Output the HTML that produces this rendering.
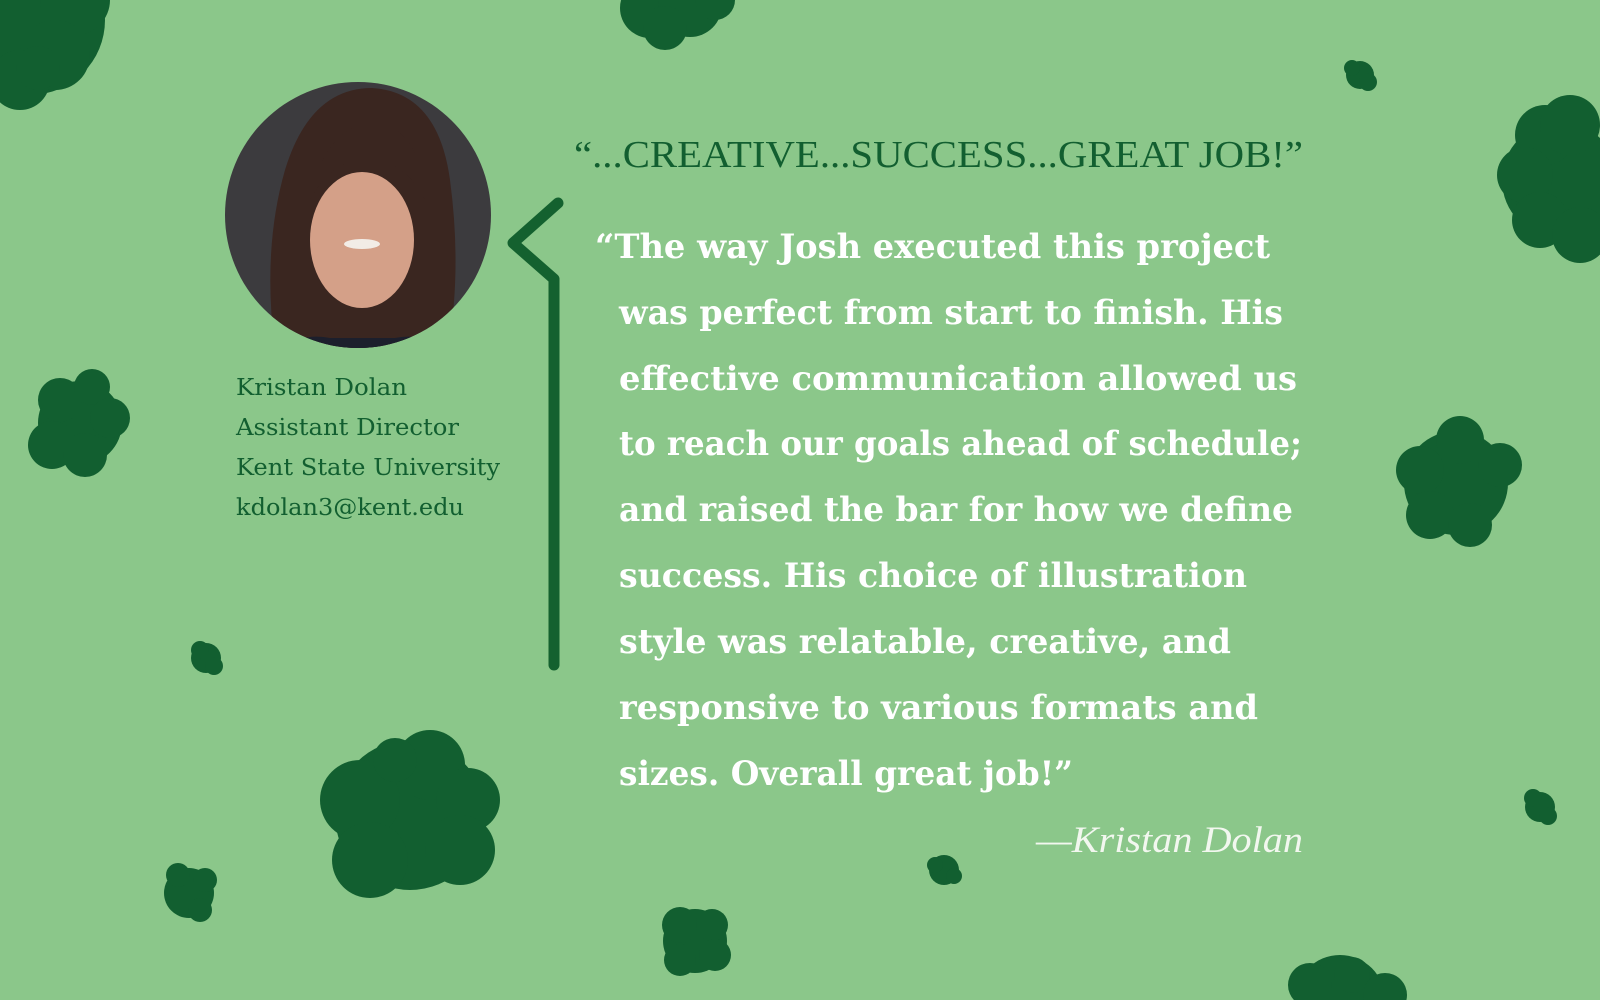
<!DOCTYPE html>
<html><head><meta charset="utf-8"><style>
html,body{margin:0;padding:0;background:#8bc78a;}
svg{display:block}
</style></head><body>
<svg width="1600" height="1000" viewBox="0 0 1600 1000" xmlns="http://www.w3.org/2000/svg">
<rect width="1600" height="1000" fill="#8bc78a"/>
<g fill="#125f30">
 <circle cx="30" cy="20" r="75"/><circle cx="75" cy="0" r="35"/><circle cx="55" cy="55" r="35"/><circle cx="20" cy="80" r="30"/><circle cx="38" cy="68" r="22"/>
 <circle cx="650" cy="8" r="30"/><circle cx="690" cy="5" r="32"/><circle cx="665" cy="28" r="22"/><circle cx="715" cy="0" r="20"/>
 <circle cx="1360" cy="75" r="14"/><circle cx="1352" cy="68" r="8"/><circle cx="1368" cy="82" r="9"/>
 <circle cx="1560" cy="180" r="58"/><circle cx="1545" cy="135" r="30"/><circle cx="1525" cy="175" r="28"/><circle cx="1540" cy="220" r="28"/><circle cx="1580" cy="235" r="28"/><circle cx="1570" cy="125" r="30"/>
 <circle cx="80" cy="423" r="42"/><circle cx="60" cy="400" r="22"/><circle cx="92" cy="387" r="18"/><circle cx="110" cy="418" r="20"/><circle cx="52" cy="445" r="24"/><circle cx="85" cy="455" r="22"/>
 <circle cx="1456" cy="483" r="52"/><circle cx="1460" cy="440" r="24"/><circle cx="1500" cy="465" r="22"/><circle cx="1420" cy="470" r="24"/><circle cx="1430" cy="515" r="24"/><circle cx="1470" cy="525" r="22"/>
 <circle cx="206" cy="658" r="15"/><circle cx="200" cy="650" r="9"/><circle cx="214" cy="666" r="9"/>
 <circle cx="410" cy="815" r="75"/><circle cx="430" cy="765" r="35"/><circle cx="360" cy="800" r="40"/><circle cx="468" cy="800" r="32"/><circle cx="460" cy="850" r="35"/><circle cx="370" cy="860" r="38"/><circle cx="395" cy="760" r="22"/>
 <circle cx="189" cy="893" r="25"/><circle cx="178" cy="875" r="12"/><circle cx="205" cy="880" r="12"/><circle cx="200" cy="910" r="12"/>
 <circle cx="944" cy="870" r="15"/><circle cx="935" cy="865" r="8"/><circle cx="954" cy="876" r="8"/>
 <circle cx="695" cy="941" r="32"/><circle cx="680" cy="925" r="18"/><circle cx="712" cy="925" r="16"/><circle cx="715" cy="955" r="16"/><circle cx="680" cy="960" r="16"/>
 <circle cx="1540" cy="807" r="15"/><circle cx="1533" cy="798" r="9"/><circle cx="1548" cy="816" r="9"/>
 <circle cx="1340" cy="1000" r="45"/><circle cx="1310" cy="985" r="22"/><circle cx="1352" cy="975" r="18"/><circle cx="1385" cy="995" r="22"/>
</g>
<rect x="300" y="898" width="230" height="40" fill="#8bc78a"/>
<defs><clipPath id="c"><circle cx="358" cy="215" r="133"/></clipPath></defs>
<g clip-path="url(#c)">
 <rect x="220" y="80" width="280" height="280" fill="#3c3b3e"/>
 <path d="M275 350 Q262 250 285 170 Q310 88 372 88 Q438 92 450 180 Q462 270 448 350 Z" fill="#3a2620"/>
 <ellipse cx="362" cy="240" rx="52" ry="68" fill="#d4a088"/>
 <path d="M310 200 Q325 125 375 122 Q420 128 425 200 Q405 160 365 158 Q330 162 310 200Z" fill="#3a2620"/>
 <path d="M255 370 Q290 330 330 338 L395 338 Q435 330 470 370 Z" fill="#1c1f2c"/>
 <ellipse cx="362" cy="244" rx="18" ry="5" fill="#f2ece6"/>
</g>
<text x="574" y="167" font-family="'Liberation Serif',serif" font-size="38" fill="#125f30" textLength="729" lengthAdjust="spacingAndGlyphs">“...CREATIVE...SUCCESS...GREAT JOB!”</text>
<g font-family="'DejaVu Serif',serif" font-size="34" font-weight="bold" fill="#ffffff">
  <text x="595" y="258" textLength="675" lengthAdjust="spacingAndGlyphs">“The way Josh executed this project</text>
  <text x="619" y="324" textLength="664" lengthAdjust="spacingAndGlyphs">was perfect from start to finish. His</text>
  <text x="619" y="390" textLength="678" lengthAdjust="spacingAndGlyphs">effective communication allowed us</text>
  <text x="619" y="455" textLength="683" lengthAdjust="spacingAndGlyphs">to reach our goals ahead of schedule;</text>
  <text x="619" y="521" textLength="674" lengthAdjust="spacingAndGlyphs">and raised the bar for how we define</text>
  <text x="619" y="587" textLength="628" lengthAdjust="spacingAndGlyphs">success. His choice of illustration</text>
  <text x="619" y="653" textLength="612" lengthAdjust="spacingAndGlyphs">style was relatable, creative, and</text>
  <text x="619" y="719" textLength="639" lengthAdjust="spacingAndGlyphs">responsive to various formats and</text>
  <text x="619" y="785" textLength="454" lengthAdjust="spacingAndGlyphs">sizes. Overall great job!”</text>
</g>
<text x="1036" y="852" font-family="'Liberation Serif',serif" font-size="37" font-style="italic" fill="#f2f7ef" textLength="267" lengthAdjust="spacingAndGlyphs">—Kristan Dolan</text>
<g font-family="'DejaVu Serif',serif" font-size="23" fill="#125f30">
  <text x="236" y="395" textLength="171" lengthAdjust="spacingAndGlyphs">Kristan Dolan</text>
  <text x="236" y="435" textLength="223" lengthAdjust="spacingAndGlyphs">Assistant Director</text>
  <text x="236" y="475" textLength="264" lengthAdjust="spacingAndGlyphs">Kent State University</text>
  <text x="236" y="515" textLength="228" lengthAdjust="spacingAndGlyphs">kdolan3@kent.edu</text>
</g>
<path d="M558 203 L513 243 L554 279 L554 665" fill="none" stroke="#14612f" stroke-width="11" stroke-linecap="round" stroke-linejoin="round"/>
</svg>
</body></html>
